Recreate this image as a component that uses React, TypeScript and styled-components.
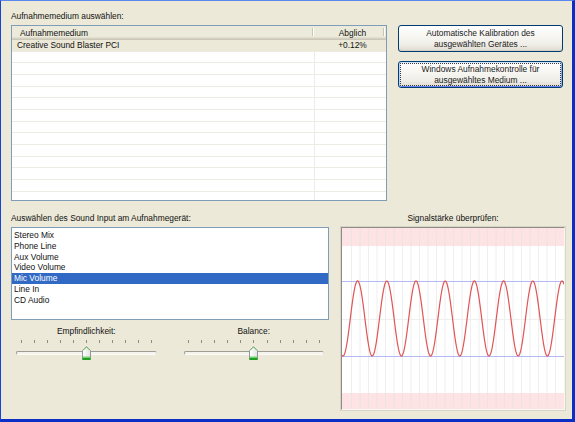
import React from "react";
import styled, { createGlobalStyle } from "styled-components";

const FONT = `"Liberation Sans", Arial, sans-serif`;

const GlobalStyle = createGlobalStyle`
  html, body {
    margin: 0;
    padding: 0;
    background: #ece9d8;
  }
  body {
    font-family: ${FONT};
  }
`;

const media = [{ name: "Creative Sound Blaster PCI", offset: "+0.12%" }];
const inputs = [
  "Stereo Mix",
  "Phone Line",
  "Aux Volume",
  "Video Volume",
  "Mic Volume",
  "Line In",
  "CD Audio",
];
const SELECTED_INPUT = 4;
const LIST_ROWS = 14;

// signal graph geometry (inner pixels)
const GW = 222;
const GH = 181;
const PERIOD = 29.2;
const MID = 90.5;
const AMP = 37.5;

const wavePath = (() => {
  const pts: string[] = [];
  for (let x = 0; x <= GW; x += 0.5) {
    const y = MID + AMP * Math.cos((2 * Math.PI * (x - 1)) / PERIOD);
    pts.push(`${x.toFixed(1)},${y.toFixed(2)}`);
  }
  return "M" + pts.join(" L");
})();

const gridXs = Array.from({ length: 25 }, (_, k) => 9 + k * 8.5);

function Thumb() {
  return (
    <svg width="9" height="14" viewBox="0 0 9 14">
      <defs>
        <linearGradient id="thumbFill" x1="0" y1="0" x2="1" y2="0">
          <stop offset="0" stopColor="#ffffff" />
          <stop offset="1" stopColor="#e4e3dc" />
        </linearGradient>
      </defs>
      <path
        d="M0.5 4.5 L4.5 0.5 L8.5 4.5 L8.5 13.5 L0.5 13.5 Z"
        fill="url(#thumbFill)"
        stroke="#8c9a9c"
        strokeWidth="1"
      />
      <path d="M1 4.5 L4.5 1 L8 4.5" fill="none" stroke="#74c874" strokeWidth="1" />
      <rect x="1" y="10.5" width="7" height="1.5" fill="#6fd46f" />
      <rect x="0.5" y="12" width="8" height="2" fill="#1ea01e" />
    </svg>
  );
}

function Slider({ label, value }: { label: string; value: number }) {
  return (
    <SliderBox>
      <SliderLabel>{label}</SliderLabel>
      <Ticks>
        {Array.from({ length: 11 }, (_, i) => (
          <Tick key={i} />
        ))}
      </Ticks>
      <TrackArea>
        <Track />
        <ThumbHolder style={{ left: `calc(${value}% - 4.5px)` }}>
          <Thumb />
        </ThumbHolder>
      </TrackArea>
    </SliderBox>
  );
}

export default function App() {
  return (
    <>
      <GlobalStyle />
      <Window>
        <TopSection>
          <MediaColumn>
            <Label>Aufnahmemedium auswählen:</Label>
            <ListView>
              <HeaderRow>
                <HeaderCell>Aufnahmemedium</HeaderCell>
                <HeaderCell $center>Abglich</HeaderCell>
              </HeaderRow>
              {Array.from({ length: LIST_ROWS }, (_, i) => {
                const item = media[i];
                const selected = i === 0;
                return (
                  <Row key={i} $selected={selected}>
                    <Cell $selected={selected}>{item?.name}</Cell>
                    <Cell $center $last>
                      {item?.offset}
                    </Cell>
                  </Row>
                );
              })}
            </ListView>
          </MediaColumn>
          <ButtonColumn>
            <Button>
              Automatische Kalibration des
              <br />
              ausgewählten Gerätes ...
            </Button>
            <Button $focused>
              Windows Aufnahmekontrolle für
              <br />
              ausgewähltes Medium ...
            </Button>
          </ButtonColumn>
        </TopSection>

        <BottomSection>
          <InputColumn>
            <Label>Auswählen des Sound Input am Aufnahmegerät:</Label>
            <ListBox>
              {inputs.map((name, i) => (
                <ListItem key={name} $selected={i === SELECTED_INPUT}>
                  {name}
                </ListItem>
              ))}
            </ListBox>
            <SliderRow>
              <Slider label="Empfindlichkeit:" value={50} />
              <Slider label="Balance:" value={50} />
            </SliderRow>
          </InputColumn>
          <SignalColumn>
            <Label $center>Signalstärke überprüfen:</Label>
            <GraphBox>
              <svg width={GW} height={GH} viewBox={`0 0 ${GW} ${GH}`}>
                <rect x="0" y="0" width={GW} height={GH} fill="#ffffff" />
                <rect x="0" y="0" width={GW} height="18" fill="#fde3e3" />
                <rect x="0" y="165" width={GW} height="16" fill="#fde3e3" />
                {gridXs.map((x) => (
                  <line
                    key={x}
                    x1={x + 0.5}
                    x2={x + 0.5}
                    y1="0"
                    y2={GH}
                    stroke="#e2e2e2"
                    strokeOpacity="0.6"
                    strokeWidth="1"
                  />
                ))}
                <line x1="0" x2={GW} y1="91.5" y2="91.5" stroke="#efefef" strokeWidth="1" />
                <line x1="0" x2={GW} y1="53.5" y2="53.5" stroke="#b3b8f6" strokeWidth="1" />
                <line x1="0" x2={GW} y1="128.5" y2="128.5" stroke="#b3b8f6" strokeWidth="1" />
                <path d={wavePath} fill="none" stroke="#e05555" strokeWidth="1.2" />
              </svg>
            </GraphBox>
          </SignalColumn>
        </BottomSection>
      </Window>
    </>
  );
}

const Window = styled.div`
  box-sizing: border-box;
  width: 575px;
  height: 422px;
  background: #ece9d8;
  border-style: solid;
  border-width: 1px 3px 3px 1px;
  border-color: #5b88ee #0b2fc4 #0b2fc4 #1544d8;
  padding: 10px 0 0 10px;
  font-family: ${FONT};
  font-size: 8.4px;
  color: #111;
  overflow: hidden;
`;

const TopSection = styled.div`
  display: flex;
  align-items: flex-start;
  gap: 11px;
`;

const MediaColumn = styled.div`
  display: flex;
  flex-direction: column;
  width: 376px;
`;

const Label = styled.div<{ $center?: boolean }>`
  height: 10px;
  line-height: 10px;
  margin-bottom: 4px;
  white-space: nowrap;
  text-align: ${(p) => (p.$center ? "center" : "left")};
`;

const ListView = styled.div`
  box-sizing: border-box;
  height: 176px;
  border: 1px solid #7f9db9;
  background: #fff;
  overflow: hidden;
`;

const HeaderRow = styled.div`
  display: grid;
  grid-template-columns: 303px 71px;
  box-sizing: border-box;
  height: 14px;
  background: linear-gradient(
    to bottom,
    #ebeadb 0,
    #ebeadb 11px,
    #e2decd 11px,
    #e2decd 12px,
    #d6d2c2 12px,
    #d6d2c2 13px,
    #cbc7b8 13px
  );
`;

const HeaderCell = styled.div<{ $center?: boolean }>`
  position: relative;
  padding: 1px 0 0 ${(p) => (p.$center ? "4px" : "8px")};
  line-height: 12px;
  white-space: nowrap;
  text-align: ${(p) => (p.$center ? "center" : "left")};

  &::after {
    content: "";
    position: absolute;
    right: 2px;
    top: 2px;
    bottom: 4px;
    width: 1px;
    background: #c7c5b2;
    box-shadow: 1px 0 0 #fff;
  }
`;

const Row = styled.div<{ $selected?: boolean }>`
  display: grid;
  grid-template-columns: 303px 71px;
  box-sizing: border-box;
  height: 11.67px;
  line-height: 11px;
  border-bottom: 1px solid #edece2;
  background: ${(p) => (p.$selected ? "#ece9d8" : "#fff")};
`;

const Cell = styled.div<{ $selected?: boolean; $center?: boolean; $last?: boolean }>`
  padding-left: ${(p) => (p.$center ? "4px" : "5px")};
  white-space: nowrap;
  text-align: ${(p) => (p.$center ? "center" : "left")};
  border-right: ${(p) =>
    p.$last ? "none" : `1px solid ${p.$selected ? "#ece9d8" : "#edece2"}`};
`;

const ButtonColumn = styled.div`
  display: flex;
  flex-direction: column;
  gap: 9px;
  width: 165px;
  margin-top: 14px;
`;

const Button = styled.div<{ $focused?: boolean }>`
  position: relative;
  box-sizing: border-box;
  height: 27px;
  border: 1px solid #003c74;
  border-radius: 3px;
  background: linear-gradient(
    to bottom,
    #ffffff 0%,
    #f7f6f2 40%,
    #efede6 75%,
    #dedad0 100%
  );
  box-shadow: ${(p) =>
    p.$focused
      ? "inset 0 1px 0 #cee7ff, inset 1px 0 0 #bcd4f6, inset -1px 0 0 #89aded, inset 0 -1px 0 #6982ee"
      : "inset 0 -1px 0 #d6d0c5"};
  display: flex;
  align-items: center;
  justify-content: center;
  text-align: center;
  line-height: 10.8px;
  color: #1a1a1a;
  white-space: nowrap;

  &::after {
    content: "";
    display: ${(p) => (p.$focused ? "block" : "none")};
    position: absolute;
    inset: 1px;
    border: 1px dotted #3a3a3a;
    border-radius: 1px;
  }
`;

const BottomSection = styled.div`
  display: flex;
  align-items: flex-start;
  gap: 12px;
  margin-top: 12px;
`;

const InputColumn = styled.div`
  display: flex;
  flex-direction: column;
  width: 318px;
`;

const ListBox = styled.div`
  box-sizing: border-box;
  height: 93px;
  padding-top: 2px;
  border: 1px solid #7f9db9;
  background: #fff;
`;

const ListItem = styled.div<{ $selected?: boolean }>`
  height: 10.8px;
  line-height: 10.8px;
  padding-left: 2px;
  white-space: nowrap;
  background: ${(p) => (p.$selected ? "#316ac5" : "transparent")};
  color: ${(p) => (p.$selected ? "#fff" : "#111")};
`;

const SliderRow = styled.div`
  display: flex;
  gap: 27px;
  padding: 0 5px;
  margin-top: 6px;
`;

const SliderBox = styled.div`
  display: flex;
  flex-direction: column;
  width: 141px;
`;

const SliderLabel = styled.div`
  height: 10px;
  line-height: 10px;
  text-align: center;
  white-space: nowrap;
`;

const Ticks = styled.div`
  display: flex;
  justify-content: space-between;
  height: 3px;
  margin-top: 4px;
  padding: 0 4px 0 4.5px;
`;

const Tick = styled.div`
  width: 1px;
  height: 3px;
  background: #8b8b8b;
`;

const TrackArea = styled.div`
  position: relative;
  height: 18px;
  margin-top: 1px;
`;

const Track = styled.div`
  box-sizing: border-box;
  margin-top: 7px;
  height: 4px;
  border: 1px solid;
  border-color: #9e9d95 #e0ded5 #fbfaf6 #9e9d95;
  border-radius: 2px;
  background: #f4f3ee;
`;

const ThumbHolder = styled.div`
  position: absolute;
  top: 2px;
  width: 9px;
  height: 14px;
  line-height: 0;
`;

const SignalColumn = styled.div`
  display: flex;
  flex-direction: column;
  width: 224px;
`;

const GraphBox = styled.div`
  box-sizing: border-box;
  width: 224px;
  height: 183px;
  border: 1px solid;
  border-color: #8d8c86 #f7f7f4 #f7f7f4 #8d8c86;
  box-shadow: 0 0 0 1px #d8d5c8;
  line-height: 0;
  background: #fff;
`;
